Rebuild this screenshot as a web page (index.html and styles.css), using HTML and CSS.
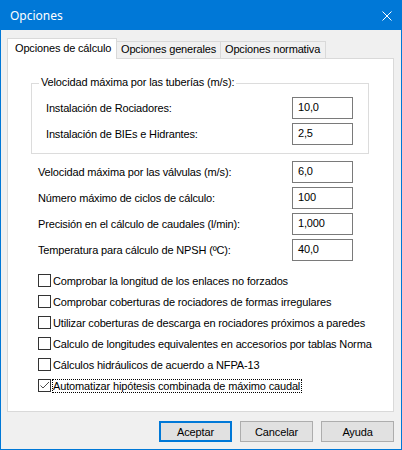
FILE: index.html
```
<!DOCTYPE html>
<html lang="es">
<head>
<meta charset="utf-8">
<title>Opciones</title>
<link rel="stylesheet" href="styles.css">
</head>
<body>
<div class="window">
  <div class="titlebar">
    <span class="title">Opciones</span>
    <svg class="close" width="10" height="10" viewBox="0 0 10 10"><path d="M0.5 0.5 L9.5 9.5 M9.5 0.5 L0.5 9.5" stroke="#fff" stroke-width="1" fill="none"/></svg>
  </div>
  <div class="content">
    <div class="tabs">
      <div class="tab active">Opciones de cálculo</div>
      <div class="tab tab-gen">Opciones generales</div>
      <div class="tab tab-norm">Opciones normativa</div>
    </div>
    <div class="panel">
      <div class="group">
        <div class="group-title">Velocidad máxima por las tuberías (m/s):</div>
        <div class="group-rows">
          <div class="row"><span>Instalación de Rociadores:</span><div class="input">10,0</div></div>
          <div class="row"><span>Instalación de BIEs e Hidrantes:</span><div class="input">2,5</div></div>
        </div>
      </div>
      <div class="fields">
        <div class="row"><span>Velocidad máxima por las válvulas (m/s):</span><div class="input">6,0</div></div>
        <div class="row"><span>Número máximo de ciclos de cálculo:</span><div class="input">100</div></div>
        <div class="row"><span>Precisión en el cálculo de caudales (l/min):</span><div class="input">1,000</div></div>
        <div class="row"><span>Temperatura para cálculo de NPSH (ºC):</span><div class="input">40,0</div></div>
      </div>
      <div class="checks">
        <div class="check"><span class="box"></span><span class="check-label">Comprobar la longitud de los enlaces no forzados</span></div>
        <div class="check"><span class="box"></span><span class="check-label">Comprobar coberturas de rociadores de formas irregulares</span></div>
        <div class="check"><span class="box"></span><span class="check-label">Utilizar coberturas de descarga en rociadores próximos a paredes</span></div>
        <div class="check"><span class="box"></span><span class="check-label">Calculo de longitudes equivalentes en accesorios por tablas Norma</span></div>
        <div class="check"><span class="box"></span><span class="check-label">Cálculos hidráulicos de acuerdo a NFPA-13</span></div>
        <div class="check"><span class="box"><svg width="11" height="11" viewBox="0 0 11 11"><polyline points="1.5,5.5 4,8 10,2" stroke="#4a4a4a" stroke-width="1" fill="none"/></svg></span><span class="check-label focus">Automatizar hipótesis combinada de máximo caudal</span></div>
      </div>
    </div>
    <div class="buttons">
      <div class="btn default">Aceptar</div>
      <div class="btn">Cancelar</div>
      <div class="btn">Ayuda</div>
    </div>
  </div>
</div>
</body>
</html>
```
FILE: styles.css
```
* { box-sizing: border-box; }
body {
  margin: 0;
  font-family: "Liberation Sans", Arial, sans-serif;
  font-size: 11px;
  letter-spacing: -0.15px;
  color: #000;
}
.window {
  width: 402px;
  height: 450px;
  border: 1px solid #0078d7;
  background: #f0f0f0;
}
.titlebar {
  height: 29px;
  background: #0078d7;
  display: flex;
  align-items: center;
  justify-content: space-between;
  padding: 0 9px 0 9px;
  color: #fff;
}
.title {
  font-family: "Noto Sans", "Open Sans", sans-serif;
  font-size: 12px;
  letter-spacing: 0;
  margin-top: -1px;
}
.close { display: block; }
.content {
  padding: 8px 7px 0 6px;
}
.tabs {
  display: flex;
  align-items: flex-end;
  height: 20px;
}
.tab {
  border: 1px solid #d9d9d9;
  border-bottom: none;
  height: 17px;
  line-height: 15px;
  padding-left: 4px;
  background: #f0f0f0;
  white-space: nowrap;
}
.tab.active {
  width: 110px;
  height: 21px;
  margin-bottom: -1px;
  padding-left: 7px;
  line-height: 18px;
  background: #fff;
  position: relative;
  z-index: 1;
}
.tab-gen { width: 105px; margin-left: -1px; }
.tab-norm { width: 106px; margin-left: -1px; }
.panel {
  height: 354px;
  border: 1px solid #d9d9d9;
  background: #fff;
  padding-top: 24px;
}
.group {
  margin: 0 24px 0 23px;
  border: 1px solid #dcdcdc;
  height: 71px;
  padding: 0 15px 0 14px;
}
.group-title {
  margin: -8px 0 0 -7px;
  width: max-content;
  padding: 0 2px;
  line-height: 13px;
  background: #fff;
}
.group-rows {
  margin-top: 8px;
  display: flex;
  flex-direction: column;
  gap: 4px;
}
.row {
  display: flex;
  justify-content: space-between;
  align-items: center;
  height: 22px;
}
.fields {
  margin-top: 7px;
  padding: 0 40px 0 30px;
  display: flex;
  flex-direction: column;
  gap: 4px;
}
.input {
  width: 61px;
  height: 22px;
  border: 1px solid #7a7a7a;
  padding-left: 5px;
  line-height: 18px;
  background: #fff;
}
.checks {
  margin-top: 9px;
  padding-left: 30px;
}
.check {
  display: flex;
  align-items: center;
  height: 21px;
}
.box {
  width: 13px;
  height: 13px;
  border: 1px solid #333;
  margin-right: 1px;
  background: #fff;
  flex: none;
}
.box svg { display: block; }
.check-label {
  border: 1px dotted transparent;
  line-height: 12px;
  padding-right: 1px;
}
.check-label.focus { border-color: #000; }
.buttons {
  display: flex;
  justify-content: flex-end;
  gap: 8px;
  margin-top: 9px;
}
.btn {
  width: 73px;
  height: 21px;
  border: 1px solid #adadad;
  background: #e1e1e1;
  display: flex;
  align-items: center;
  justify-content: center;
}
.btn.default { border: 2px solid #0078d7; }
```
